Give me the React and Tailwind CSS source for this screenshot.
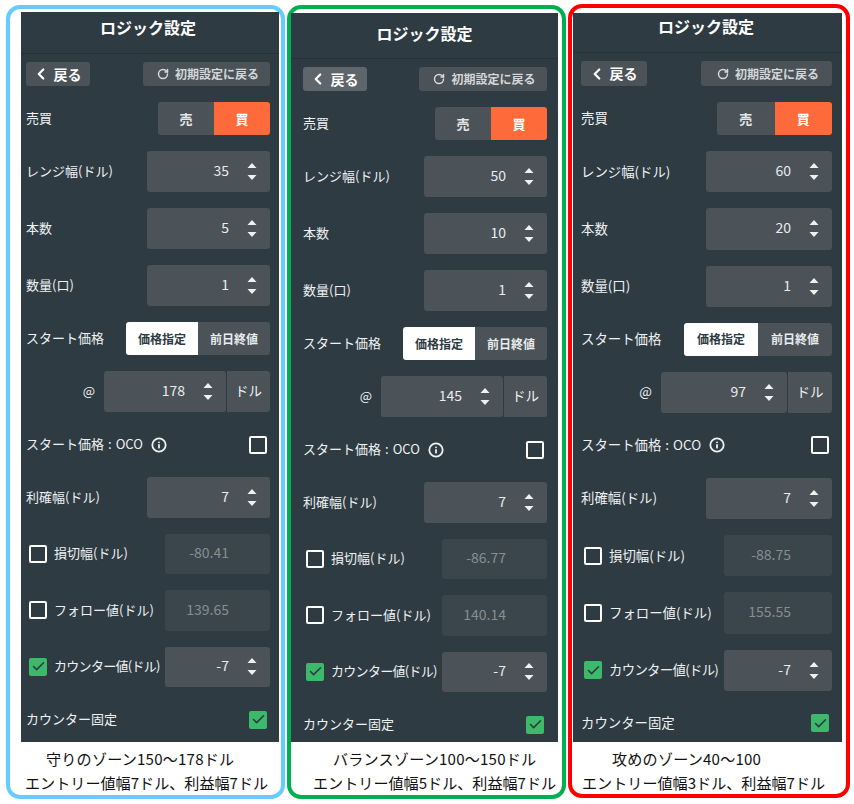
import { Check, ChevronLeft, Info, RotateCw } from 'lucide-react'

const panels = [
  {
    frame: 'ml-[6px] mt-[5px] h-[794px] w-[279px] border-[#66ccff]',
    dark: 'ml-[11px] mt-[3px] h-[730px] w-[258px]',
    header: 'h-[42px] pr-[4px] pb-[11px]',
    body: 'pl-[5px] pr-[9px]',
    text: 'text-[13px]',
    bar: 'h-[24px]',
    back: 'w-[64px] bg-[#4b5258]',
    reset: 'w-[127px]',
    toggle: 'w-[112px]',
    input: 'w-[123px]',
    high: 'h-[41px]',
    low: 'h-[40.5px]',
    start: 'w-[144px]',
    limit: 'w-[122px]',
    unit: 'w-[43px]',
    small: 'w-[105px]',
    cap1: 'ml-[36px]',
    cap2: 'ml-[15px]',
    range: '35',
    count: '5',
    price: '178',
    stop: '-80.41',
    follow: '139.65',
    line1: '守りのゾーン150〜178ドル',
    line2: 'エントリー値幅7ドル、利益幅7ドル',
  },
  {
    frame: 'ml-[2px] mt-[5px] h-[794px] w-[279px] border-[#00b050]',
    dark: 'ml-0 mt-[4px] h-[729px] w-[267px]',
    header: 'h-[46px] pb-[6px]',
    body: 'pl-[12px] pr-[11px]',
    text: 'text-[13px]',
    bar: 'h-[24px]',
    back: 'w-[64px] bg-[#5e666c]',
    reset: 'w-[128px]',
    toggle: 'w-[112px]',
    input: 'w-[123px]',
    high: 'h-[41px]',
    low: 'h-[40.5px]',
    start: 'w-[144px]',
    limit: 'w-[122px]',
    unit: 'w-[43px]',
    small: 'w-[105px]',
    cap1: 'ml-[42px]',
    cap2: 'ml-[22px]',
    range: '50',
    count: '10',
    price: '145',
    stop: '-86.77',
    follow: '140.14',
    line1: 'バランスゾーン100〜150ドル',
    line2: 'エントリー値幅5ドル、利益幅7ドル',
  },
  {
    frame: 'ml-[2px] mt-[4px] h-[794px] w-[282px] border-[#ff0000]',
    dark: 'ml-px mt-[5px] h-[729px] w-[269px]',
    header: 'h-[40px] pr-[3px] pb-[13px]',
    body: 'pl-[8px] pr-[10px]',
    text: 'text-[13.4px]',
    bar: 'h-[25px]',
    back: 'w-[66px] bg-[#4b5258]',
    reset: 'w-[131px]',
    toggle: 'w-[115px]',
    input: 'w-[126px]',
    high: 'h-[41.25px]',
    low: 'h-[41.25px]',
    start: 'w-[148px]',
    limit: 'w-[126px]',
    unit: 'w-[44px]',
    small: 'w-[108px]',
    cap1: 'ml-[40px]',
    cap2: 'ml-[10px]',
    range: '60',
    count: '20',
    price: '97',
    stop: '-88.75',
    follow: '155.55',
    line1: '攻めのゾーン40〜100',
    line2: 'エントリー値幅3ドル、利益幅7ドル',
  },
]

function Spinner() {
  return (
    <svg width="10" height="17" viewBox="0 0 10 17" className="shrink-0">
      <path d="M5 0 L9.5 5 H0.5 Z" fill="#eef1f2" />
      <path d="M0.5 12 H9.5 L5 17 Z" fill="#eef1f2" />
    </svg>
  )
}

function NumberInput({ value, width }) {
  return (
    <div className={`flex h-full shrink-0 items-center justify-end gap-[18px] rounded-[3px] bg-[#4b5258] pr-[13px] text-[14px] text-[#e8ecee] ${width}`}>
      <span className="pb-[2px]">{value}</span>
      <Spinner />
    </div>
  )
}

function Disabled({ value, width }) {
  return (
    <div className={`flex h-full shrink-0 items-center justify-end rounded-[3px] bg-[#3b464c] pb-[2px] pr-[41px] text-[14px] text-[#868e92] ${width}`}>
      {value}
    </div>
  )
}

function Box({ checked }) {
  if (checked) {
    return (
      <span className="flex h-[18px] w-[18px] shrink-0 items-center justify-center rounded-[2px] bg-[#3cb96a]">
        <Check size={15} strokeWidth={2.5} color="#2e3b42" />
      </span>
    )
  }
  return <span className="block h-[18px] w-[18px] shrink-0 rounded-[2px] border-2 border-white" />
}

function Row({ height, children }) {
  return <div className={`flex items-center justify-between ${height}`}>{children}</div>
}

function Label({ children }) {
  return <span className="whitespace-nowrap pb-[2px]">{children}</span>
}

function CheckLabel({ checked, label, tight }) {
  return (
    <span className="ml-[3px] flex items-center gap-[7px] whitespace-nowrap">
      <Box checked={checked} />
      <span className={`pb-[2px] ${tight ? 'tracking-[-0.7px]' : ''}`}>{label}</span>
    </span>
  )
}

function Panel({ c }) {
  return (
    <div className={`shrink-0 rounded-[14px] border-4 bg-white ${c.frame}`}>
      <div className={`flex flex-col bg-[#2e3b42] text-[#eef1f2] ${c.dark} ${c.text}`}>
        <div className={`flex shrink-0 items-center justify-center border-b border-[#263238] text-[16px] font-bold text-white ${c.header}`}>
          ロジック設定
        </div>
        <div className={`flex flex-col gap-4 pt-[8px] ${c.body}`}>
          <Row height={c.bar}>
            <div className={`flex h-full items-center justify-center gap-[4px] rounded-[3px] text-[14px] font-bold text-white ${c.back}`}>
              <ChevronLeft size={18} strokeWidth={3} className="-ml-[3px]" />
              戻る
            </div>
            <div className={`flex h-full items-center justify-center gap-[6px] rounded-[3px] bg-[#4b5258] pl-[3px] text-[12px] font-bold text-[#d3d7d9] ${c.reset}`}>
              <RotateCw size={12} strokeWidth={3} />
              初期設定に戻る
            </div>
          </Row>
          <Row height="h-[33px]">
            <Label>売買</Label>
            <div className={`flex h-full overflow-hidden rounded-[3px] text-[13px] font-bold text-white ${c.toggle}`}>
              <span className="flex flex-1 items-center justify-center bg-[#4b5258] text-[#e4e7e8]">売</span>
              <span className="flex flex-1 items-center justify-center bg-[#ff6a3a]">買</span>
            </div>
          </Row>
          <Row height={c.high}>
            <Label>レンジ幅(ドル)</Label>
            <NumberInput value={c.range} width={c.input} />
          </Row>
          <Row height={c.high}>
            <Label>本数</Label>
            <NumberInput value={c.count} width={c.input} />
          </Row>
          <Row height={c.high}>
            <Label>数量(口)</Label>
            <NumberInput value="1" width={c.input} />
          </Row>
          <Row height="h-[33px]">
            <Label>スタート価格</Label>
            <div className={`flex h-full overflow-hidden rounded-[3px] text-[12px] font-bold ${c.start}`}>
              <span className="flex flex-1 items-center justify-center bg-white text-[#2e3b42]">価格指定</span>
              <span className="flex flex-1 items-center justify-center bg-[#4b5258] text-[#e8ecee]">前日終値</span>
            </div>
          </Row>
          <div className="flex h-[41px] items-center justify-end">
            <span className="mr-[9px] pb-[2px]">@</span>
            <NumberInput value={c.price} width={c.limit} />
            <div className={`ml-px flex h-full items-center justify-center rounded-r-[3px] bg-[#4b5258] pb-[2px] text-[13.5px] ${c.unit}`}>ドル</div>
          </div>
          <Row height="h-[33px]">
            <span className="flex items-center gap-[8px] whitespace-nowrap">
              <span className="pb-[2px]">
                スタート価格<span className="mx-[4px]">:</span>OCO
              </span>
              <Info size={16} strokeWidth={2.7} />
            </span>
            <span className="mr-[3px]">
              <Box />
            </span>
          </Row>
          <Row height={c.low}>
            <Label>利確幅(ドル)</Label>
            <NumberInput value="7" width={c.input} />
          </Row>
          <Row height={c.low}>
            <CheckLabel label="損切幅(ドル)" />
            <Disabled value={c.stop} width={c.small} />
          </Row>
          <Row height={c.low}>
            <CheckLabel label="フォロー値(ドル)" />
            <Disabled value={c.follow} width={c.small} />
          </Row>
          <Row height={c.low}>
            <CheckLabel checked tight label="カウンター値(ドル)" />
            <NumberInput value="-7" width={c.small} />
          </Row>
          <Row height="h-[33px]">
            <Label>カウンター固定</Label>
            <span className="mr-[3px]">
              <Box checked />
            </span>
          </Row>
        </div>
      </div>
      <div className="mt-[4px] text-[15.1px] leading-[24px] text-[#111]">
        <p className={`whitespace-nowrap tracking-[0.2px] ${c.cap1}`}>{c.line1}</p>
        <p className={`whitespace-nowrap ${c.cap2}`}>{c.line2}</p>
      </div>
    </div>
  )
}

export default function App() {
  return (
    <div className="flex h-[804px] w-[854px] items-start overflow-hidden bg-white font-['Noto_Sans_CJK_JP','Noto_Sans',sans-serif]">
      {panels.map((c) => (
        <Panel key={c.range} c={c} />
      ))}
    </div>
  )
}
